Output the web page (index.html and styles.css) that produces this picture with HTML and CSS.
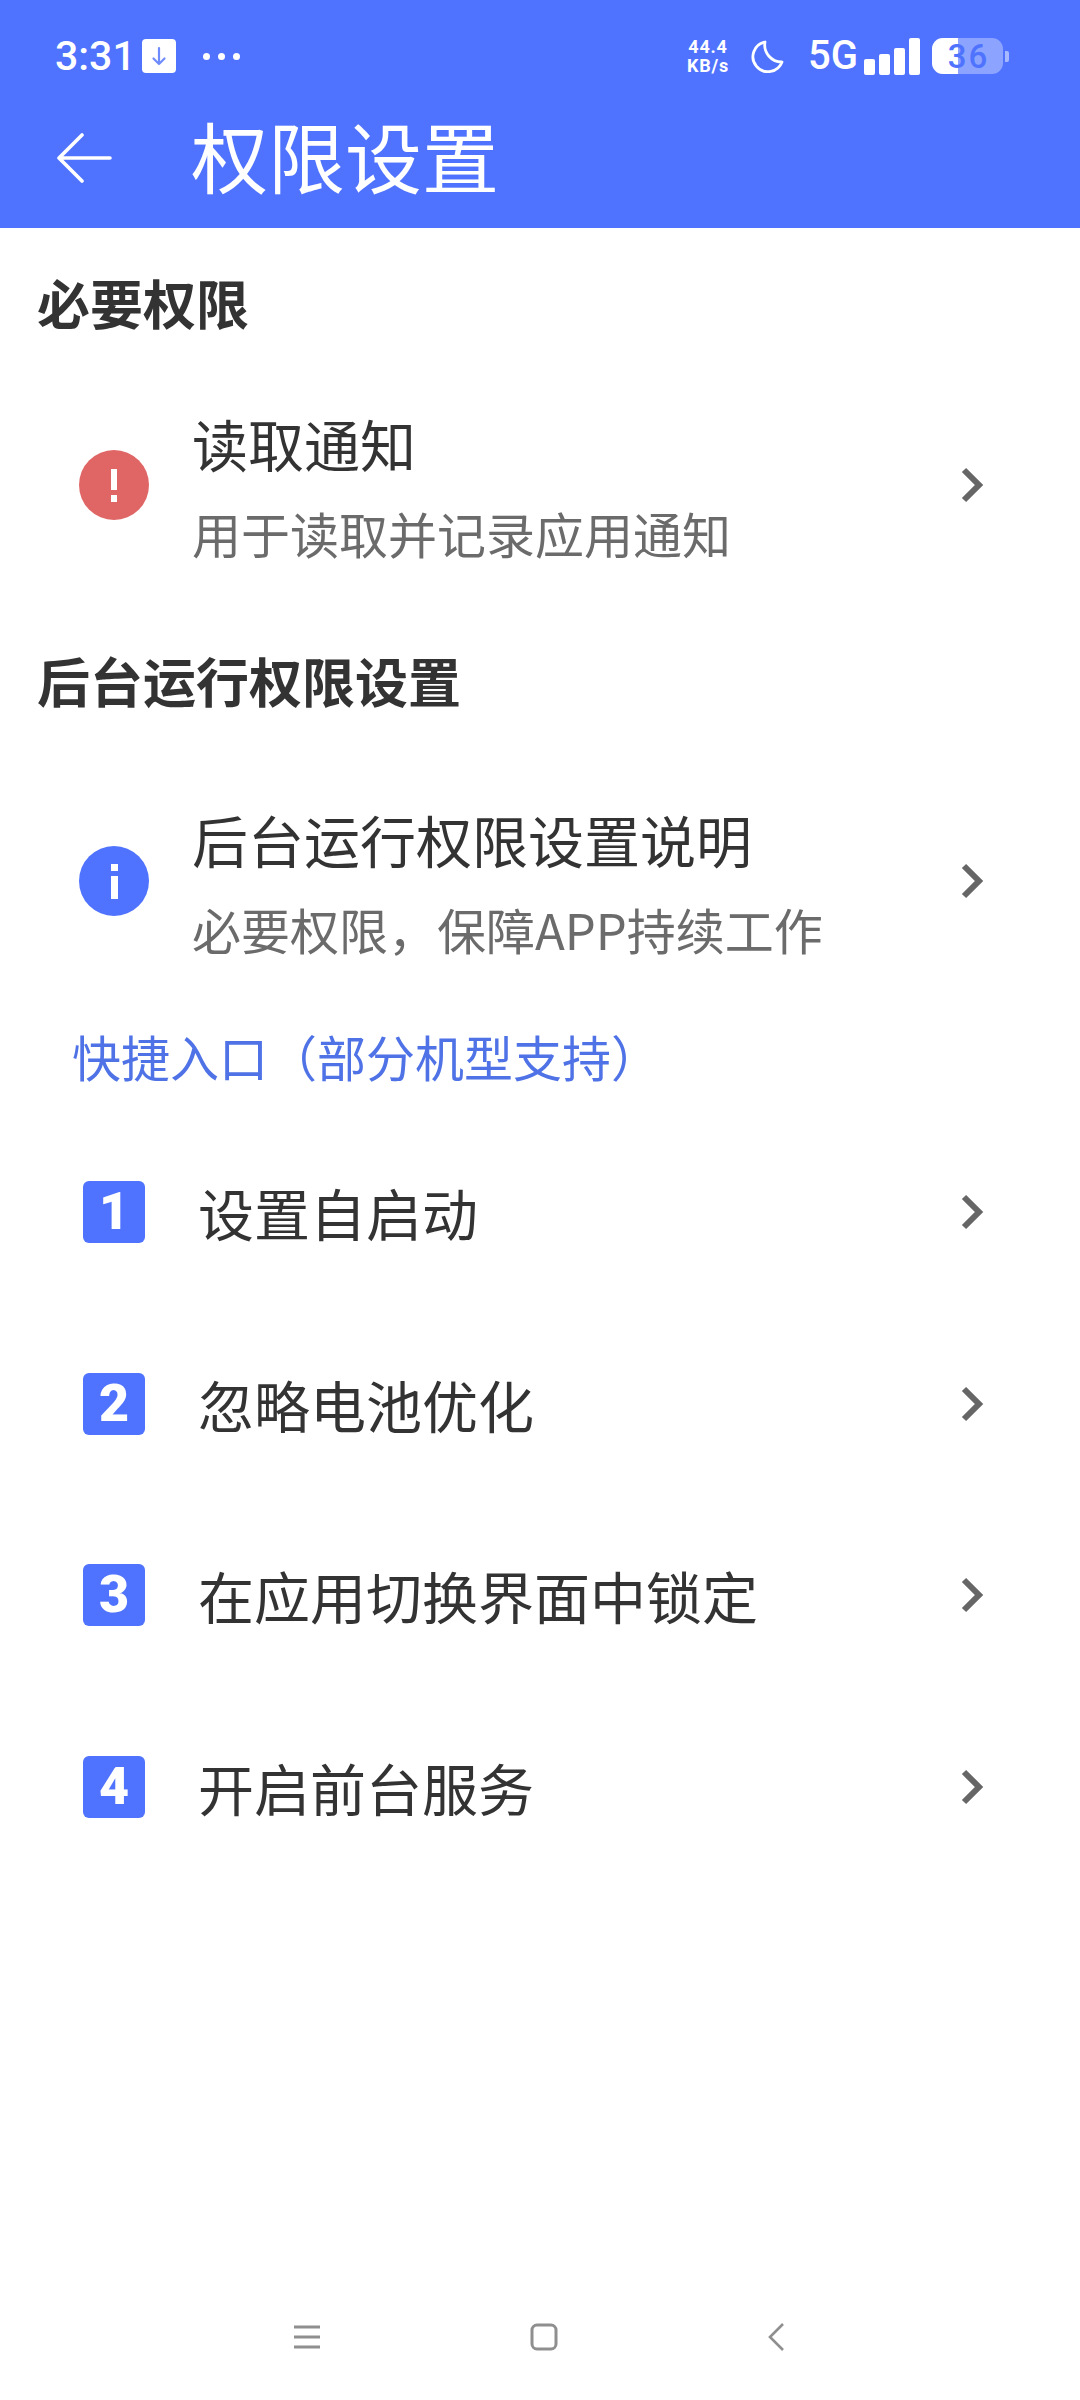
FILE: index.html
```html
<!DOCTYPE html>
<html lang="zh-CN">
<head>
  <meta charset="UTF-8">
  <title>权限设置</title>
  <link rel="stylesheet" href="styles.css">
</head>
<body>

  <header class="appbar">
    <div class="status">
      <div class="status-left">
        <span class="time">3:31</span>
        <span class="notif">
          <svg width="34" height="34" viewBox="0 0 34 34"><path d="M17 9v16M11.500 19.500l5.500 5.500 5.500-5.500" fill="none" stroke="#6f8cff" stroke-width="2.200" stroke-linecap="round" stroke-linejoin="round"/></svg>
        </span>
        <span class="dots"><i></i><i></i><i></i></span>
      </div>
      <div class="status-right">
        <span class="speed">44.4<br>KB/s</span>
        <svg class="moon" width="34" height="34" viewBox="0 0 34 34"><path d="M15 3A15 15 0 1 0 32 23A17 17 0 0 1 15 3z" fill="none" stroke="#fff" stroke-width="2.800" stroke-linejoin="round"/></svg>
        <span class="net">5G</span>
        <span class="bars"><i class="b1"></i><i class="b2"></i><i class="b3"></i><i class="b4"></i></span>
        <span class="battery"><span class="battery-fill"></span><span class="battery-num">36</span></span>
        <span class="battery-tip"></span>
      </div>
    </div>
    <div class="toolbar">
      <svg class="back" width="56" height="50" viewBox="0 0 56 50"><path d="M54 25H3M26 2L3 25l23 23" fill="none" stroke="#fff" stroke-width="3.600" stroke-linecap="round" stroke-linejoin="round"/></svg>
      <h1>权限设置</h1>
    </div>
  </header>

  <main>
    <h2 class="section first">必要权限</h2>
    <div class="row tall">
      <span class="round red">
        <svg width="70" height="70" viewBox="0 0 70 70"><path d="M32 19h6v21h-6zM32 45h6v7h-6z" fill="#fff"/></svg>
      </span>
      <div class="texts">
        <div class="name">读取通知</div>
        <div class="sub">用于读取并记录应用通知</div>
      </div>
      <svg class="chev" width="24" height="40" viewBox="0 0 24 40"><path d="M4 5l15 15L4 35" fill="none" stroke="#666" stroke-width="6"/></svg>
    </div>

    <h2 class="section second">后台运行权限设置</h2>
    <div class="row tall">
      <span class="round blue">
        <svg width="70" height="70" viewBox="0 0 70 70"><path d="M32 18h7v7h-7zM32 30h7v23h-7z" fill="#fff"/></svg>
      </span>
      <div class="texts">
        <div class="name">后台运行权限设置说明</div>
        <div class="sub">必要权限，保障APP持续工作</div>
      </div>
      <svg class="chev" width="24" height="40" viewBox="0 0 24 40"><path d="M4 5l15 15L4 35" fill="none" stroke="#666" stroke-width="6"/></svg>
    </div>

    <div class="link">快捷入口（部分机型支持）</div>

    <div class="row step">
      <span class="num">1</span>
      <div class="name">设置自启动</div>
      <svg class="chev" width="24" height="40" viewBox="0 0 24 40"><path d="M4 5l15 15L4 35" fill="none" stroke="#666" stroke-width="6"/></svg>
    </div>
    <div class="row step">
      <span class="num">2</span>
      <div class="name">忽略电池优化</div>
      <svg class="chev" width="24" height="40" viewBox="0 0 24 40"><path d="M4 5l15 15L4 35" fill="none" stroke="#666" stroke-width="6"/></svg>
    </div>
    <div class="row step">
      <span class="num">3</span>
      <div class="name">在应用切换界面中锁定</div>
      <svg class="chev" width="24" height="40" viewBox="0 0 24 40"><path d="M4 5l15 15L4 35" fill="none" stroke="#666" stroke-width="6"/></svg>
    </div>
    <div class="row step">
      <span class="num">4</span>
      <div class="name">开启前台服务</div>
      <svg class="chev" width="24" height="40" viewBox="0 0 24 40"><path d="M4 5l15 15L4 35" fill="none" stroke="#666" stroke-width="6"/></svg>
    </div>
  </main>

  <nav class="navbar">
    <svg width="28" height="24" viewBox="0 0 28 24"><path d="M1 2h26M1 12h26M1 22h26" fill="none" stroke="#8f8f8f" stroke-width="3"/></svg>
    <svg width="28" height="30" viewBox="0 0 28 30"><rect x="2" y="3" width="24" height="24" rx="5" fill="none" stroke="#8f8f8f" stroke-width="3"/></svg>
    <svg width="18" height="30" viewBox="0 0 18 30"><path d="M17 2L4 15l13 13" fill="none" stroke="#8f8f8f" stroke-width="2.600"/></svg>
  </nav>

</body>
</html>
```

FILE: styles.css
```css
* {
	box-sizing: border-box;
}

body {
	margin: 0;
	width: 1080px;
	height: 2400px;
	display: flex;
	flex-direction: column;
	background: #fff;
	color: #333;
	font-family: "Noto Sans CJK SC", "Noto Sans", sans-serif;
}

.appbar {
	height: 228px;
	background: #4f73ff;
	color: #fff;
}

.status {
	height: 95px;
	padding: 38px 71px 0 55px;
	display: flex;
	justify-content: space-between;
	align-items: flex-start;
	font-family: Roboto, sans-serif;
}

.status-left,
.status-right {
	display: flex;
	align-items: center;
	height: 36px;
}

.time {
	font-size: 41px;
	font-weight: 500;
	line-height: 36px;
}

.notif {
	width: 34px;
	height: 34px;
	margin-left: 6px;
	background: #fff;
	border-radius: 4px;
}

.notif svg {
	display: block;
}

.dots {
	display: flex;
	gap: 8px;
	margin-left: 27px;
}

.dots i {
	width: 7px;
	height: 7px;
	border-radius: 50%;
	background: #fff;
}

.speed {
	font-size: 18px;
	font-weight: 700;
	line-height: 19px;
	text-align: center;
	letter-spacing: 0.8px;
	margin-right: 21px;
}

.net {
	font-size: 40px;
	font-weight: 500;
	line-height: 36px;
	margin-left: 24px;
	margin-right: 6px;
}

.bars {
	display: flex;
	align-items: flex-end;
	gap: 4px;
	height: 38px;
}

.bars i {
	width: 11px;
	background: #fff;
	border-radius: 2px;
}

.b1 { height: 16px; }
.b2 { height: 21px; }
.b3 { height: 27px; }
.b4 { height: 37px; }

.battery {
	position: relative;
	width: 71px;
	height: 36px;
	margin-left: 12px;
	border-radius: 11px;
	background: rgba(255, 255, 255, 0.35);
	overflow: hidden;
	display: flex;
	align-items: center;
	justify-content: center;
}

.battery-fill {
	position: absolute;
	left: 0;
	top: 0;
	bottom: 0;
	width: 26px;
	background: #fff;
}

.battery-num {
	position: relative;
	font-size: 33px;
	font-weight: 500;
	letter-spacing: 2px;
	margin-right: -2px;
	color: #4f73ff;
}

.battery-tip {
	width: 4px;
	height: 11px;
	margin-left: 2px;
	background: rgba(255, 255, 255, 0.5);
	border-radius: 0 2px 2px 0;
}

.toolbar {
	height: 120px;
	padding-left: 56px;
	display: flex;
	align-items: center;
}

.back {
	flex: none;
	margin-top: 5px;
}

h1 {
	margin: 0 0 0 79px;
	font-size: 77px;
	font-weight: 400;
	line-height: 100px;
}

main {
	flex: 1;
}

.section {
	padding-left: 37px;
	height: 100px;
	line-height: 100px;
	font-size: 53px;
	font-weight: 700;
}

.section.first {
	margin: 24px 0 33px;
}

.section.second {
	margin: 45px 0 51px;
}

.row {
	display: flex;
	align-items: center;
}

.tall {
	height: 200px;
	padding: 0 96px 0 79px;
}

.step {
	height: 191.7px;
	padding: 0 96px 0 83px;
}

.round {
	flex: none;
	width: 70px;
	height: 70px;
	border-radius: 50%;
}

.round svg {
	display: block;
}

.red {
	background: #e06666;
}

.blue {
	background: #4f73ff;
}

.texts {
	flex: 1;
	margin-left: 43px;
}

.name {
	font-size: 56px;
	line-height: 76px;
	flex: 1;
}

.sub {
	margin-top: 20px;
	font-size: 49px;
	line-height: 64px;
	color: #6b6b6b;
}

.num {
	flex: none;
	width: 62px;
	height: 62px;
	margin-right: 53px;
	background: #4f73ff;
	border-radius: 6px;
	color: #fff;
	font-family: Roboto, sans-serif;
	font-size: 52px;
	font-weight: 900;
	line-height: 62px;
	text-align: center;
}

.chev {
	flex: none;
}

.link {
	height: 96px;
	margin: 27px 0 12px;
	padding-left: 72px;
	font-size: 49px;
	line-height: 96px;
	color: #4f73e6;
}

.navbar {
	height: 110px;
	padding: 32px 296px 48px 293px;
	display: flex;
	justify-content: space-between;
	align-items: center;
}
```
